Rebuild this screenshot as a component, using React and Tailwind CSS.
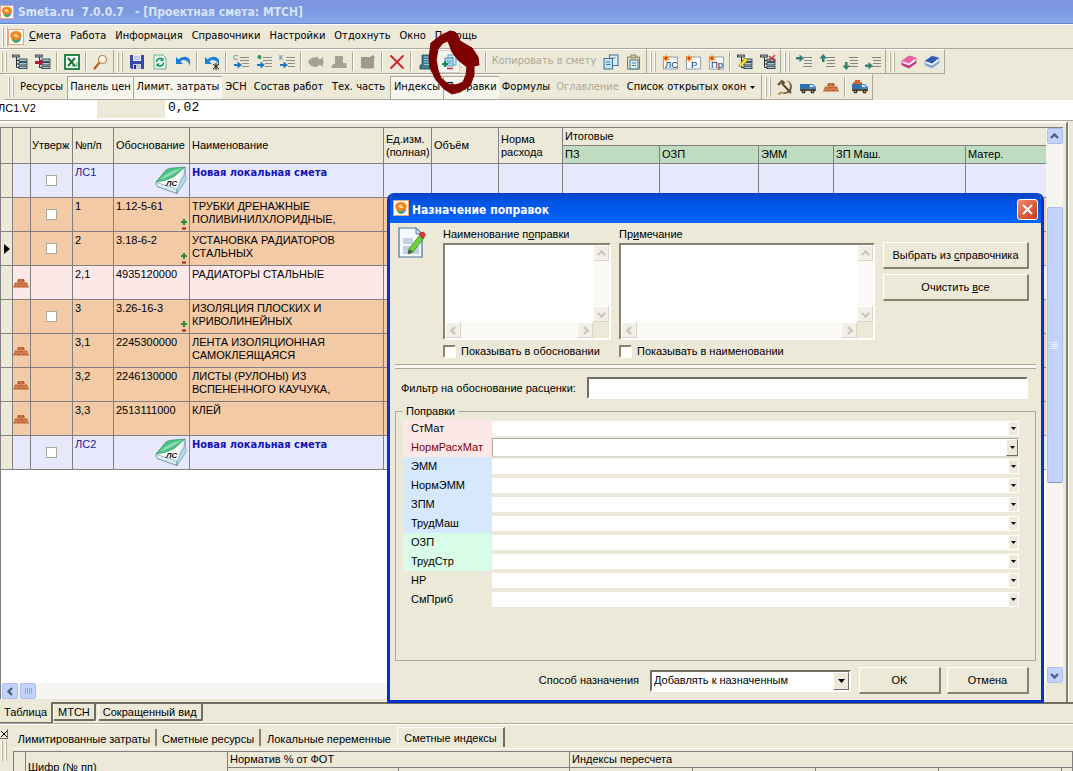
import { useState } from 'react';

const TAHOMA = "font-['DejaVu_Sans_Condensed','DejaVu_Sans',sans-serif]";
const SANS = "font-['Liberation_Sans',Arial,sans-serif]";

/* ---------- icons ---------- */

const Svg = ({ children, className = 'w-4 h-4' }) => (
  <svg viewBox="0 0 16 16" className={`${className} shrink-0`} aria-hidden="true">
    {children}
  </svg>
);

const AppIcon = ({ className }) => (
  <Svg className={className}>
    <rect x="0.5" y="0.5" width="15" height="15" fill="#fff" stroke="#e7a27e" />
    <path d="M3 8 Q4 14 8.500 14 Q13 13 13 8Z" fill="#4fa84a" />
    <path d="M9 13.500 Q13.500 12 13 7 L9 9Z" fill="#3f8fd0" />
    <ellipse cx="8" cy="6.500" rx="5.800" ry="4.600" fill="#f58220" />
    <path d="M5 7 Q6 4 9.500 4.500 L8 6 L11 7 Q8 9.500 7 7.500Z" fill="#ffe08a" />
  </Svg>
);

const TreeBase = () => (
  <>
    <rect x="0.5" y="1" width="7" height="2" fill="#9fb6c8" stroke="#1c2f3a" strokeWidth="0.8" />
    <path d="M4.500 3v10.500H8M4.500 6.500H8M4.500 10H8" fill="none" stroke="#1c2f3a" />
    <rect x="7" y="5" width="8" height="2.400" fill="#a8c8d8" stroke="#1c2f3a" strokeWidth="0.8" />
    <rect x="7" y="8.600" width="8" height="2.400" fill="#a8c8d8" stroke="#1c2f3a" strokeWidth="0.8" />
    <rect x="7" y="12.200" width="8" height="2.400" fill="#a8c8d8" stroke="#1c2f3a" strokeWidth="0.8" />
  </>
);

const TreeIcon = () => <Svg><TreeBase /></Svg>;

const TreeAddIcon = () => (
  <Svg>
    <TreeBase />
    <path d="M0 7h4V4.500L8.500 8.500 4 12.500V10H0z" fill="#b5173b" />
  </Svg>
);

const TreeEditIcon = () => (
  <Svg>
    <TreeBase />
    <path d="M2 11 L8 4 L11 6 L5 12 L2 12.500Z" fill="#ffd83a" stroke="#9a7a00" strokeWidth="0.6" />
  </Svg>
);

const TreeDeleteIcon = () => (
  <Svg>
    <TreeBase />
    <path d="M9 2l6 5M15 1L9 7" stroke="#c3242f" strokeWidth="1.200" />
  </Svg>
);

const ExcelIcon = () => (
  <Svg>
    <rect x="1" y="1" width="14" height="14" fill="#fff" stroke="#137a33" strokeWidth="1.800" />
    <path d="M4 4l7 8M11 4l-7 8" stroke="#137a33" strokeWidth="2" />
    <path d="M8 12h5V8" fill="none" stroke="#137a33" strokeWidth="0.8" />
  </Svg>
);

const MagnifierIcon = () => (
  <Svg>
    <path d="M6.500 8.500L1.500 14.500" stroke="#b0622a" strokeWidth="2.200" strokeLinecap="round" />
    <circle cx="9.500" cy="5.500" r="4" fill="#fdf6ec" stroke="#c4824a" strokeWidth="1.200" />
  </Svg>
);

const SaveIcon = () => (
  <Svg>
    <path d="M1 1h14v14H2.500L1 13.500z" fill="#3a49a8" />
    <rect x="4" y="1" width="8" height="6" fill="#e9edf7" />
    <path d="M5 3h6M5 5h6" stroke="#9aa6cf" />
    <rect x="4" y="10" width="8" height="5" fill="#c9cede" />
    <rect x="5" y="11" width="2" height="4" fill="#27348a" />
  </Svg>
);

const RefreshDocIcon = () => (
  <Svg>
    <path d="M2 1h9l3 3v11H2z" fill="#eefaf6" stroke="#3f9d8c" strokeWidth="0.8" />
    <path d="M4.500 8a3.500 3.500 0 0 1 6-2.500M11.500 8.500a3.500 3.500 0 0 1-6 2.500" fill="none" stroke="#159447" strokeWidth="1.600" />
    <path d="M11.500 3.500v3.500H8zM4.500 13V9.500H8z" fill="#159447" />
  </Svg>
);

const UndoPath = () => (
  <path d="M1 3v7h7L5.500 7.500Q9 4.500 13 8q1.500 1.500 1.500 4Q17 4 10.500 2.800Q6.500 2.200 3.500 5.200z" fill="#1f7fd6" />
);

const UndoIcon = () => <Svg><UndoPath /></Svg>;

const UndoAllIcon = () => (
  <Svg>
    <UndoPath />
    <path d="M12 9v7M9 10l6 5M15 10l-6 5" stroke="#000" />
  </Svg>
);

const LetterLinesIcon = ({ letter }) => (
  <Svg>
    <path d="M7 3.500h9M7 6.500h9M9 9.500h7M9 12.500h7" stroke="#8c8c86" />
    {letter ? (
      <text x="0" y="6" fontSize="7" fill="#666" fontFamily="Liberation Sans">{letter}</text>
    ) : (
      <circle cx="3.500" cy="3" r="2" fill="#1e9a52" />
    )}
    <path d="M1 10h3.500V7.500L9 11l-4.500 3.500V12H1z" fill="#1f74c8" />
  </Svg>
);

const FishIcon = () => (
  <Svg>
    <path d="M0 8 Q2 3.500 7 3.500 L9 2.500 10 4l2 1.500L15 3v3.500l1 1.500-1 1.500V13l-3-2.500q-2 2.500-5 2.500Q2 12.500 0 8Z" fill="#a5a293" />
  </Svg>
);

const StampIcon = () => (
  <Svg>
    <path d="M4 2h8v7h3l1 5H0l2-4h2z" fill="#a5a293" />
  </Svg>
);

const NoteIcon = () => (
  <Svg>
    <path d="M1 3h9l3-2 2 2-1 2v9q-7 1-13 0z" fill="#9d9a8b" />
  </Svg>
);

const DeleteIcon = () => (
  <Svg>
    <path d="M2 2L14 14M14 2L2 14" stroke="#d3202b" strokeWidth="1.800" strokeLinecap="round" />
  </Svg>
);

const StackIcon = () => (
  <Svg>
    <path d="M4 1h11v4h-3v8h2v2H2v-4h2z" fill="#3d7f92" stroke="#1c4656" strokeWidth="0.8" />
    <path d="M6 3h7M6 5.500h5M6 8h5M6 10.500h5" stroke="#a9d2de" strokeWidth="0.9" />
  </Svg>
);

const CorrectionsIcon = () => (
  <Svg>
    <rect x="7" y="1" width="8" height="10" fill="#d6eef8" stroke="#4b92b0" strokeWidth="0.9" />
    <rect x="4" y="4" width="8" height="8" fill="#aad7ea" stroke="#4b92b0" strokeWidth="0.9" />
    <path d="M9 3.500h4M6 7h4M6 9h4" stroke="#4b92b0" strokeWidth="0.8" />
    <path d="M1 10h6M4 7v6" stroke="#138a4e" strokeWidth="2" />
    <path d="M6 14.500h6" stroke="#c2304a" strokeWidth="1.600" />
  </Svg>
);

const PlusIcon = () => (
  <Svg>
    <path d="M0 9h6M3 6v6" stroke="#138a4e" strokeWidth="2" />
  </Svg>
);

const CopyIcon = () => (
  <Svg>
    <rect x="6.500" y="1" width="8.500" height="10.500" fill="#d8eefc" stroke="#3f6f93" />
    <rect x="1" y="4.500" width="8.500" height="10.500" fill="#bfe2f6" stroke="#3f6f93" />
    <path d="M8.500 4h4M3 8h4.500M3 10.500h4.500" stroke="#3f6f93" strokeWidth="0.9" />
  </Svg>
);

const PasteIcon = () => (
  <Svg>
    <path d="M1.500 3h12v12h-12z" fill="#e8e2c0" stroke="#7b7a58" />
    <rect x="5" y="1" width="5" height="3" fill="#c9c9a6" stroke="#7b7a58" strokeWidth="0.8" />
    <rect x="4" y="6" width="8" height="9" fill="#d6eaf4" stroke="#46788f" />
    <path d="M6 9h4M6 11.500h4" stroke="#46788f" strokeWidth="0.9" />
  </Svg>
);

const NewDocIcon = ({ letter }) => (
  <Svg>
    <rect x="1.500" y="3" width="14" height="12" fill="#f6f8fb" stroke="#7f8a98" strokeWidth="0.8" />
    <text x={letter.length > 1 ? 3 : 6} y="13.500" fontSize="9.500" fill="#123a5c" fontFamily="Liberation Sans">{letter}</text>
    <path d="M4 0l1 2.500L7.800 2 6 4.200 8 6.500l-3-.5L4 8.500 3 6 0 6.500l2-2.300L.5 2l2.700.5z" fill="#f79a1c" />
    <circle cx="4" cy="4.200" r="1.200" fill="#d22" />
  </Svg>
);

const movePaths = {
  right: 'M0 3h3.500V.5L8 4.200 3.500 8V5.500H0z',
  up: 'M3 8V4.500H.5L4.200 0 8 4.500H5.500V8z',
  down: 'M3 8v3.500H.5L4.200 16 8 11.500H5.500V8z',
  rightLow: 'M0 10.500h3.500V8L8 11.800 3.500 15.500V13H0z',
};

const MoveIcon = ({ dir }) => (
  <Svg>
    <path d="M7 3.500h9M8 6.500h8M8 9.500h8M7 12.500h9" stroke="#85857c" />
    <path d={movePaths[dir]} fill="#2d8073" />
  </Svg>
);

const EraserIcon = ({ top, side }) => (
  <Svg>
    <path d="M1 7l7-5 7 2v5l-7 5-7-3z" fill="#f3f0f4" stroke={side} strokeWidth="0.8" />
    <path d="M1 7l7-5 7 2-7 5.500z" fill={top} />
    <path d="M8 11.500l7-4.500v2l-7 5-7-3V9z" fill={side} />
  </Svg>
);

const HammerIcon = () => (
  <Svg>
    <path d="M9 1q6.500 2 6 7.500T8 15q-2 0-4-1.500 6.500.5 8.500-4T9 1Z" fill="#7b6a45" />
    <path d="M1 6l4-4 2 1.500-1.500 1.500L14 14" fill="none" stroke="#5b4a2b" strokeWidth="2" />
    <path d="M4.500 13l-3 2.500" stroke="#b08a3a" strokeWidth="2" />
  </Svg>
);

const Truck = ({ load }) => (
  <Svg>
    {load && <path d="M1 5V3h2V1h5v2h2v2z" fill="#d2642a" />}
    <path d="M0 5h9v5H0z" fill="#2f72b0" />
    <path d="M9 5h3.500L16 8v3.500H9z" fill="#3f86c6" />
    <path d="M10 6h2.200l1.800 2h-4z" fill="#d9eefa" />
    <path d="M0 10h16v2H0z" fill="#5c5136" />
    <circle cx="3.500" cy="12.500" r="2" fill="#2a2a2a" />
    <circle cx="12.500" cy="12.500" r="2" fill="#2a2a2a" />
    <circle cx="3.500" cy="12.500" r="0.8" fill="#d9c36a" />
    <circle cx="12.500" cy="12.500" r="0.8" fill="#d9c36a" />
  </Svg>
);

const BricksIcon = () => (
  <Svg>
    <path d="M5 4h6l1 3.500h2l2 5H0l2-5h2z" fill="#b9602f" />
    <path d="M1 10h14M3 7.500h10M8 4v3.500M5 7.500V10M11 7.500V10M3 10v2.500M8 10v2.500M13 10v2.500" stroke="#ecab80" strokeWidth="0.6" />
  </Svg>
);

const BookIcon = () => (
  <svg viewBox="0 0 32 28" className="w-8 h-7 shrink-0" aria-hidden="true">
    <path d="M1 16L22 23V27.500L3 21Q0 19 1 16Z" fill="#d9ecf5" stroke="#4d8795" strokeWidth="0.8" />
    <path d="M1 16L22 23 31 14 30 1Z" fill="#fff" />
    <path d="M30 1L31 14 22 27.500V23L29 9Z" fill="#b9dcea" stroke="#4d8795" strokeWidth="0.6" />
    <path d="M1 16L22 23 30 1" fill="#fff" stroke="#7fb0bd" strokeWidth="0.5" />
    <path d="M1 16L10 5Q12 2.500 17 2L30 1 20 10Q12 15 1 16Z" fill="#4fc488" stroke="#2c8a5c" strokeWidth="0.6" />
    <path d="M4 14 Q14 5 27 2 Q16 10 4 14Z" fill="#a9ebc4" opacity="0.7" />
    <text x="11" y="20" fontSize="8" fontStyle="italic" fontWeight="bold" fill="#111" fontFamily="Liberation Sans">ЛС</text>
  </svg>
);

const EditPageIcon = () => (
  <svg viewBox="0 0 30 32" className="w-[30px] h-8" aria-hidden="true">
    <path d="M1 1h17l6 6v23H1z" fill="#f4f8fc" stroke="#4a6f96" strokeWidth="1.200" />
    <path d="M18 1v6h6z" fill="#c9d8e6" stroke="#4a6f96" strokeWidth="0.8" />
    <path d="M5 11h10v6H5zM5 19h16v8H5z" fill="#c3d0e2" />
    <path d="M11 22L21 9l4 3-10 13-5 2z" fill="#6fd13c" stroke="#2f8a1c" strokeWidth="0.8" />
    <path d="M10 27l1-5 4 3z" fill="#555" />
    <path d="M21 8l1.500-2.500q3.500-1.500 5 2L25.500 11.500z" fill="#d83a34" stroke="#8f1d1a" strokeWidth="0.6" />
  </svg>
);

const CorrectionMark = () => (
  <svg viewBox="0 0 8 12" className="w-2 h-3 shrink-0" aria-hidden="true">
    <path d="M1 4h6M4 1v6" stroke="#2f8f2a" strokeWidth="2.200" />
    <path d="M2 10.500h4" stroke="#a3211b" strokeWidth="2" />
  </svg>
);

const Chevron = ({ dir, color }) => {
  const d = {
    up: 'M2 7l3.500-3.500L9 7',
    down: 'M2 4l3.500 3.500L9 4',
    left: 'M7 2L3.500 5.500 7 9',
    right: 'M4 2l3.500 3.500L4 9',
  }[dir];
  return (
    <svg viewBox="0 0 11 11" className="w-[11px] h-[11px]" aria-hidden="true">
      <path d={d} fill="none" stroke={color} strokeWidth="2.400" />
    </svg>
  );
};

const Triangle = () => (
  <svg viewBox="0 0 7 4" className="w-[7px] h-1" aria-hidden="true">
    <path d="M0 0h7L3.500 4z" fill="#000" />
  </svg>
);

/* ---------- toolbars ---------- */

const Grip = () => (
  <span className="flex gap-[2px] h-5 shrink-0">
    <span className="w-[2px] border-l border-white border-r border-r-[#b5b19d]" />
    <span className="w-[2px] border-l border-white border-r border-r-[#b5b19d]" />
  </span>
);

const Sep = () => (
  <span className="w-[6px] flex justify-center self-stretch py-[2px] shrink-0">
    <span className="w-[2px] border-l border-[#aca899] border-r border-r-white" />
  </span>
);

const Group = ({ first, children }) => (
  <div className="flex items-center h-full pr-px border-r border-b border-[#aca899] border-t border-t-white shrink-0">
    <span className={first ? 'w-2 flex justify-center' : 'w-[11px] flex justify-center'}>
      <Grip />
    </span>
    {children}
  </div>
);

const Tool = ({ label, pressed, children }) => (
  <button
    type="button"
    aria-label={label}
    className={`w-[23px] h-[23px] flex items-center justify-center shrink-0 ${pressed ? 'bg-[#f6f5ee] border border-[#d5d2c2]' : ''}`}
  >
    {children}
  </button>
);

const MainToolbar = () => (
  <div className="flex h-[26px] border-t border-[#aca899]">
    <Group first>
      <Tool label="Дерево"><TreeIcon /></Tool>
      <Tool label="Добавить в дерево"><TreeAddIcon /></Tool>
      <Sep />
      <Tool label="Excel"><ExcelIcon /></Tool>
      <Sep />
      <Tool label="Поиск"><MagnifierIcon /></Tool>
    </Group>
    <Group>
      <Tool label="Сохранить"><SaveIcon /></Tool>
      <Tool label="Обновить"><RefreshDocIcon /></Tool>
      <Tool label="Отменить"><UndoIcon /></Tool>
      <Sep />
      <Tool label="Отменить все"><UndoAllIcon /></Tool>
      <Sep />
      <Tool label="Вставить строку С"><LetterLinesIcon letter="С" /></Tool>
      <Tool label="Вставить строку"><LetterLinesIcon /></Tool>
      <Tool label="Вставить строку К"><LetterLinesIcon letter="К" /></Tool>
      <Sep />
      <Tool label="Расценка"><FishIcon /></Tool>
      <Tool label="Штамп"><StampIcon /></Tool>
      <Sep />
      <Tool label="Комментарий"><NoteIcon /></Tool>
      <Sep />
      <Tool label="Удалить"><DeleteIcon /></Tool>
      <Sep />
      <Tool label="Индексы"><StackIcon /></Tool>
      <Tool label="Поправки" pressed><CorrectionsIcon /></Tool>
      <Tool label="Добавить поправку"><PlusIcon /></Tool>
      <Sep />
      <button type="button" disabled className="w-[110px] h-[23px] text-center text-[#aca899] shrink-0 whitespace-nowrap">
        Копировать в смету
      </button>
      <Tool label="Копировать"><CopyIcon /></Tool>
      <Tool label="Вставить"><PasteIcon /></Tool>
    </Group>
    <Group>
      <Tool label="Новая локальная смета"><NewDocIcon letter="ЛС" /></Tool>
      <Tool label="Новый раздел"><NewDocIcon letter="Р" /></Tool>
      <Tool label="Новый подраздел"><NewDocIcon letter="Пр" /></Tool>
      <Sep />
      <Tool label="Изменить"><TreeEditIcon /></Tool>
      <Tool label="Удалить из дерева"><TreeDeleteIcon /></Tool>
    </Group>
    <Group>
      <Tool label="Вправо"><MoveIcon dir="right" /></Tool>
      <Tool label="Вверх"><MoveIcon dir="up" /></Tool>
      <Tool label="Вниз"><MoveIcon dir="down" /></Tool>
      <Tool label="В конец"><MoveIcon dir="rightLow" /></Tool>
    </Group>
    <Group>
      <Tool label="Розовый справочник"><EraserIcon top="#ee5fa4" side="#c23277" /></Tool>
      <Tool label="Синий справочник"><EraserIcon top="#2f57b8" side="#7fa6d8" /></Tool>
    </Group>
  </div>
);

const panels = [
  { text: 'Ресурсы', width: 'w-[51px]' },
  { text: 'Панель цен', width: 'w-[66px]', on: true },
  { text: 'Лимит. затраты', width: 'w-[89px]', on: true },
  { text: 'ЭСН', width: 'w-[28px]' },
  { text: 'Состав работ', width: 'w-[77px]' },
  { text: 'Тех. часть', width: 'w-[63px]' },
  { text: 'Индексы', width: 'w-[53px]', on: true },
  { text: 'Поправки', width: 'w-[56px]', on: true },
  { text: 'Формулы', width: 'w-[54px]' },
  { text: 'Оглавление', width: 'w-[69px]', off: true },
];

const PanelToolbar = () => (
  <div className="flex h-[26px] pl-[5px]">
    <Group>
      {panels.map((p) => (
        <button
          key={p.text}
          type="button"
          disabled={p.off}
          className={`${p.width} h-[23px] flex items-center justify-center whitespace-nowrap shrink-0 ${
            p.on ? 'bg-[#f6f5ee] border-t border-l border-[#aca899]' : ''
          } ${p.off ? 'text-[#aca899]' : ''}`}
        >
          {p.text}
        </button>
      ))}
      <button type="button" className="w-[138px] h-[23px] flex items-center justify-center gap-1 whitespace-nowrap shrink-0">
        Список открытых окон
        <svg viewBox="0 0 5 3" className="w-[5px] h-[3px]" aria-hidden="true">
          <path d="M0 0h5L2.500 3z" />
        </svg>
      </button>
    </Group>
    <Group>
      <Tool label="Работы"><HammerIcon /></Tool>
      <Tool label="Машины"><Truck /></Tool>
      <Tool label="Материалы"><BricksIcon /></Tool>
      <Sep />
      <Tool label="Перевозка"><Truck load /></Tool>
    </Group>
  </div>
);

const menuItems = ['Работа', 'Информация', 'Справочники', 'Настройки', 'Отдохнуть', 'Окно', 'Помощь'];

const MenuBar = () => (
  <div className="h-6 flex items-center pl-[2px] border-t border-white">
    <Grip />
    <AppIcon className="w-4 h-4" />
    <nav className="flex gap-[9px] pl-[5px]">
      <button type="button"><u>С</u>мета</button>
      {menuItems.map((m) => (
        <button key={m} type="button">{m}</button>
      ))}
    </nav>
  </div>
);

/* Hand-drawn marker loop round the corrections button */
const MarkerLoop = () => (
  <svg viewBox="0 0 60 68" className="absolute left-[424px] top-[29px] w-[60px] h-[68px] pointer-events-none" aria-hidden="true">
    <path
      fillRule="evenodd"
      fill="#7d0000"
      stroke="#7d0000"
      strokeLinejoin="round"
      d="M26 2L31 3 34 6 36 12 48 19 54 28 55 36 50 37 50 46 46 57 36 63 28 65 20 60 12 51 6 39 5 29 7 14 16 7Z
         M19 14L14 20 12 31 14 41 17 49 24 55 32 56 39 53 42 46 43 38 34 31 28 23 24 12Z"
    />
  </svg>
);

/* ---------- estimate grid ---------- */

const rows = [
  { num: 'ЛС1', title: 'Новая локальная смета', kind: 'head', check: true },
  { num: '1', code: '1.12-5-61', title: 'ТРУБКИ ДРЕНАЖНЫЕ ПОЛИВИНИЛХЛОРИДНЫЕ,', kind: 'work', check: true, mark: true },
  { num: '2', code: '3.18-6-2', title: 'УСТАНОВКА РАДИАТОРОВ СТАЛЬНЫХ', kind: 'work', check: true, mark: true, current: true },
  { num: '2,1', code: '4935120000', title: 'РАДИАТОРЫ СТАЛЬНЫЕ', kind: 'pink', bricks: true },
  { num: '3', code: '3.26-16-3', title: 'ИЗОЛЯЦИЯ ПЛОСКИХ И КРИВОЛИНЕЙНЫХ', kind: 'work', check: true, mark: true },
  { num: '3,1', code: '2245300000', title: 'ЛЕНТА ИЗОЛЯЦИОННАЯ САМОКЛЕЯЩАЯСЯ', kind: 'work', bricks: true },
  { num: '3,2', code: '2246130000', title: 'ЛИСТЫ (РУЛОНЫ) ИЗ ВСПЕНЕННОГО КАУЧУКА,', kind: 'work', bricks: true },
  { num: '3,3', code: '2513111000', title: 'КЛЕЙ', kind: 'work', bricks: true },
  { num: 'ЛС2', title: 'Новая локальная смета', kind: 'head', check: true },
];

const rowBg = { head: 'bg-[#e8e8fc]', work: 'bg-[#f2caa6]', pink: 'bg-[#fde8e8]' };
const line = 'border-r border-b border-[#808080]';

const EstimateTable = () => (
  <table className={`${SANS} table-fixed w-full border-separate border-spacing-0 text-left leading-[13px]`}>
    <colgroup>
      <col className="w-[12px]" />
      <col className="w-[18px]" />
      <col className="w-[42px]" />
      <col className="w-[41px]" />
      <col className="w-[76px]" />
      <col className="w-[194px]" />
      <col className="w-[48px]" />
      <col className="w-[67px]" />
      <col className="w-[64px]" />
      <col className="w-[97px]" />
      <col className="w-[99px]" />
      <col className="w-[75px]" />
      <col className="w-[132px]" />
      <col />
    </colgroup>
    <thead className="bg-[#ece9d8]">
      <tr className="h-[18px]">
        <th rowSpan={2} className={line} />
        <th rowSpan={2} className={line} />
        <th rowSpan={2} className={`${line} font-normal pl-px whitespace-nowrap`}>Утверж</th>
        <th rowSpan={2} className={`${line} font-normal pl-[2px] whitespace-nowrap`}>№п/п</th>
        <th rowSpan={2} className={`${line} font-normal pl-[2px] whitespace-nowrap`}>Обоснование</th>
        <th rowSpan={2} className={`${line} font-normal pl-[2px]`}>Наименование</th>
        <th rowSpan={2} className={`${line} font-normal pl-[2px] whitespace-nowrap`}>Ед.изм.<br />(полная)</th>
        <th rowSpan={2} className={`${line} font-normal pl-[2px]`}>Объём</th>
        <th rowSpan={2} className={`${line} font-normal pl-[2px]`}>Норма<br />расхода</th>
        <th colSpan={5} className="border-b border-[#808080] font-normal pl-[2px]">Итоговые</th>
      </tr>
      <tr className="h-[18px] bg-[#c0dcc0]">
        <th className={`${line} font-normal pl-[2px]`}>ПЗ</th>
        <th className={`${line} font-normal pl-[2px]`}>ОЗП</th>
        <th className={`${line} font-normal pl-[2px]`}>ЭММ</th>
        <th className={`${line} font-normal pl-[2px]`}>ЗП Маш.</th>
        <th className="border-b border-[#808080] font-normal pl-[2px]">Матер.</th>
      </tr>
    </thead>
    <tbody>
      {rows.map((r) => (
        <tr key={r.num} className={`h-[34px] align-top ${rowBg[r.kind]}`}>
          <td className={`${line} bg-[#ece9d8] align-middle`}>
            {r.current && (
              <svg viewBox="0 0 6 10" className="w-[6px] h-[10px] ml-[3px]" aria-hidden="true">
                <path d="M0 0l6 5-6 5z" />
              </svg>
            )}
          </td>
          <td className={`${line} align-middle`}>{r.bricks && <BricksIcon />}</td>
          <td className={`${line} align-middle text-center`}>
            {r.check && (
              <input
                type="checkbox"
                aria-label={`Утверждено ${r.num}`}
                className="block mx-auto w-[11px] h-[11px] appearance-none bg-white border border-[#aca899] checked:bg-gray-500"
              />
            )}
          </td>
          <td className={`${line} pl-[2px] pt-[2px] ${r.kind === 'head' ? 'text-[#1a1a9c]' : ''}`}>{r.num}</td>
          <td className={`${line} pl-[2px] ${r.kind === 'head' ? '' : 'pt-[2px]'}`}>
            {r.kind === 'head' ? (
              <div className="flex justify-end pr-[2px] pt-[2px]"><BookIcon /></div>
            ) : (
              <div className="flex h-[30px] justify-between">
                <span>{r.code}</span>
                {r.mark && <span className="self-end pr-[1px]"><CorrectionMark /></span>}
              </div>
            )}
          </td>
          <td className={`${line} px-[2px] pt-[2px]`}>
            {r.kind === 'head' ? (
              <b className={`${TAHOMA} text-[#1414b4]`}>{r.title}</b>
            ) : (
              <span className="block w-[160px]">{r.title}</span>
            )}
          </td>
          {[0, 1, 2, 3, 4, 5, 6].map((c) => <td key={c} className={line} />)}
          <td className="border-b border-[#808080]" />
        </tr>
      ))}
    </tbody>
  </table>
);

const ScrollButton = ({ dir, label }) => (
  <button
    type="button"
    aria-label={label}
    className="w-4 h-4 flex items-center justify-center rounded-[2px] bg-[#c3d3fd] border border-[#a9bdf0] shrink-0"
  >
    <Chevron dir={dir} color="#4d6185" />
  </button>
);

const EstimateView = () => (
  <div className="flex-1 min-h-0 flex border-t border-[#aca899]">
    <div className="flex-1 min-w-0 flex flex-col border-t-2 border-white border-r-2 border-r-[#85826f]">
      <div className="h-1 shrink-0" />
      <div className="flex-1 min-h-0 flex border-t border-[#808080] mr-[3px]">
        <div className="flex-1 min-w-0 flex flex-col border-l border-[#808080]">
          <div className="flex-1 min-h-0 overflow-hidden bg-white">
            <EstimateTable />
          </div>
          <div className="h-4 flex gap-[2px] pl-[1px] bg-[#f6f5f1] shrink-0">
            <ScrollButton dir="left" label="Прокрутить влево" />
            <span className="w-4 flex items-center justify-center gap-[1px] rounded-[2px] bg-[#c3d3fd] border border-[#a9bdf0]">
              {[0, 1, 2, 3].map((i) => <span key={i} className="w-px h-[6px] bg-[#8fa8e0]" />)}
            </span>
          </div>
        </div>
        <div className="w-[17px] flex flex-col items-center bg-[#f6f5f1] mb-4 shrink-0">
          <ScrollButton dir="up" label="Прокрутить вверх" />
          <span className="h-[63px]" />
          <span className="h-[276px] w-4 flex flex-col items-center justify-center gap-[1px] rounded-[2px] bg-[#c3d3fd] border border-[#a9bdf0] border-b-[#7f93c8]">
            {[0, 1, 2, 3].map((i) => <span key={i} className="w-[7px] h-px bg-[#eef4fe]" />)}
          </span>
          <span className="flex-1" />
          <ScrollButton dir="down" label="Прокрутить вниз" />
        </div>
      </div>
      <div className="h-[3px] shrink-0" />
    </div>
    <div className="w-[5px] border-l border-white shrink-0" />
  </div>
);

const viewTabs = ['МТСН', 'Сокращенный вид'];

const ViewTabs = () => (
  <div className={`${SANS} h-[22px] flex items-start border-b border-[#aca899] shrink-0`}>
    <button type="button" className="h-[21px] w-[53px] border-r-2 border-b border-[#716f64] shrink-0">Таблица</button>
    <div className="flex-1 flex border-t-2 border-[#716f64] gap-[2px]">
      {viewTabs.map((t) => (
        <button key={t} type="button" className="h-[17px] px-[4px] border-r-2 border-b-2 border-[#716f64] border-l border-l-white rounded-b-[2px]">
          {t}
        </button>
      ))}
    </div>
  </div>
);

const BottomPanel = () => (
  <div className={`${SANS} h-[47px] flex overflow-hidden border-t border-white shrink-0`}>
    <div className="w-[13px] shrink-0">
      <button type="button" aria-label="Закрыть панель" className="w-2 h-[10px] mt-[4px] flex items-center justify-center border-r border-b border-[#716f64]">
        <svg viewBox="0 0 6 6" className="w-[6px] h-[6px]" aria-hidden="true">
          <path d="M0 0l6 6M6 0L0 6" stroke="#000" />
        </svg>
      </button>
      <div className="pl-[1px] pt-[2px]"><Grip /></div>
    </div>
    <div className="flex-1 min-w-0">
      <div className="h-[24px] flex items-start border-b border-white leading-[24px]">
        <button type="button" className="w-[144px] h-[17px] mt-[4px] leading-[20px] border-r-2 border-[#85826f] whitespace-nowrap">Лимитированные затраты</button>
        <button type="button" className="w-[104px] h-[17px] mt-[4px] leading-[20px] border-r-2 border-[#85826f] whitespace-nowrap">Сметные ресурсы</button>
        <button type="button" className="w-[137px] h-[17px] mt-[4px] leading-[20px] border-r border-white whitespace-nowrap">Локальные переменные</button>
        <button type="button" className="w-[107px] h-[20px] mt-[2px] leading-[18px] border-r-2 border-[#716f64] border-t border-t-white whitespace-nowrap">Сметные индексы</button>
      </div>
      <div className="h-[2px]" />
      <table className="table-fixed w-full border-separate border-spacing-0 border-t border-l border-[#808080] text-left">
        <colgroup>
          <col className="w-[12px]" />
          <col className="w-[202px]" />
          <col className="w-[171px]" />
          <col className="w-[171px]" />
          <col className="w-[123px]" />
          <col className="w-[123px]" />
          <col className="w-[123px]" />
          <col className="w-[123px]" />
          <col />
        </colgroup>
        <thead>
          <tr className="h-4">
            <th rowSpan={2} className={line} />
            <th rowSpan={2} className={`${line} font-normal pl-[2px]`}>Шифр (№ пп)</th>
            <th colSpan={2} className={`${line} font-normal pl-[2px] leading-[15px]`}>Норматив % от ФОТ</th>
            <th colSpan={5} className={`${line} font-normal pl-[2px] leading-[15px]`}>Индексы пересчета</th>
          </tr>
          <tr className="h-4">
            {[0, 1, 2, 3, 4, 5, 6].map((c) => <th key={c} className={line} />)}
          </tr>
        </thead>
      </table>
    </div>
  </div>
);

/* ---------- corrections dialog ---------- */

const DullButton = ({ dir }) => (
  <span className="w-4 h-4 flex items-center justify-center bg-[#f1efe6] border border-white border-r-[#d8d5c6] border-b-[#d8d5c6]">
    <Chevron dir={dir} color="#c9c7ba" />
  </span>
);

const Memo = ({ id }) => (
  <div className="grid grid-cols-[1fr_16px] grid-rows-[1fr_16px] h-[97px] bg-white border-2 border-[#85826f] border-r-white border-b-white">
    <textarea id={id} className="resize-none outline-none w-full h-full px-1 bg-white" />
    <div className="flex flex-col justify-between bg-[#fbfaf7]">
      <DullButton dir="up" />
      <DullButton dir="down" />
    </div>
    <div className="flex justify-between bg-[#fbfaf7]">
      <DullButton dir="left" />
      <DullButton dir="right" />
    </div>
    <div className="bg-[#ece9d8]" />
  </div>
);

const PushButton = ({ className = '', children }) => (
  <button
    type="button"
    className={`h-[27px] bg-[#ece9d8] border border-white border-r-2 border-b-2 border-r-[#85826f] border-b-[#85826f] ${className}`}
  >
    {children}
  </button>
);

const Check = ({ label }) => (
  <label className="flex items-center gap-[5px] mt-[4px] h-[14px] whitespace-nowrap">
    <input
      type="checkbox"
      className="w-[13px] h-[13px] appearance-none bg-white border-2 border-[#85826f] border-r-white border-b-white checked:bg-gray-500"
    />
    {label}
  </label>
);

const coefficients = [
  { name: 'СтМат', bg: 'bg-[#fde8e8]' },
  { name: 'НормРасхМат', bg: 'bg-[#fde8e8]', active: true },
  { name: 'ЭММ', bg: 'bg-[#d6e8fc]' },
  { name: 'НормЭММ', bg: 'bg-[#d6e8fc]' },
  { name: 'ЗПМ', bg: 'bg-[#d6e8fc]' },
  { name: 'ТрудМаш', bg: 'bg-[#d6e8fc]' },
  { name: 'ОЗП', bg: 'bg-[#d8fce8]' },
  { name: 'ТрудСтр', bg: 'bg-[#d8fce8]' },
  { name: 'НР', bg: '' },
  { name: 'СмПриб', bg: '' },
];

const CoefficientRow = ({ name, bg, active }) => (
  <div className="h-[19px] flex items-center">
    <label htmlFor={`k-${name}`} className={`w-[88px] h-full pl-2 leading-[19px] shrink-0 ${bg} ${active ? 'text-[#7d0000]' : ''}`}>
      {name}
    </label>
    <div
      className={`flex-1 ml-px flex bg-white ${
        active ? 'h-[19px] border border-[#aca899] border-r-white border-b-[#d5d2c2]' : 'h-[15px]'
      }`}
    >
      <select id={`k-${name}`} className="flex-1 appearance-none outline-none bg-white px-1" />
      <span
        className={`flex items-center justify-center pointer-events-none bg-[#ece9d8] ${
          active ? 'w-3 border border-white border-r-[#716f64] border-b-[#716f64]' : 'w-[11px] border border-white'
        }`}
      >
        <svg viewBox="0 0 5 3" className="w-[5px] h-[3px]" aria-hidden="true">
          <path d="M0 0h5L2.500 3z" />
        </svg>
      </span>
    </div>
  </div>
);

const CorrectionsDialog = ({ onClose }) => {
  const [filter, setFilter] = useState('');

  return (
    <section
      role="dialog"
      aria-labelledby="dialog-title"
      className={`${SANS} absolute left-[387px] top-[193px] w-[657px] flex flex-col rounded-t-[7px] bg-[#ece9d8] border-[3px] border-t-0 border-[#0831c8] overflow-hidden`}
    >
      <header className="h-[30px] -mx-[3px] px-[6px] flex items-center bg-linear-to-b from-[#0a3fc0] via-[#0055e5] via-30% to-[#0264f8]">
        <AppIcon className="w-4 h-4" />
        <h2 id="dialog-title" className={`${TAHOMA} text-xs font-bold text-white pl-[3px] pt-[3px] flex-1`}>
          Назначение поправок
        </h2>
        <button
          type="button"
          aria-label="Закрыть"
          onClick={onClose}
          className="w-[21px] h-[21px] mt-[2px] flex items-center justify-center rounded-[3px] border border-white bg-linear-to-br from-[#ee8a6c] to-[#c8330f]"
        >
          <svg viewBox="0 0 11 11" className="w-[11px] h-[11px]" aria-hidden="true">
            <path d="M1 1l9 9M10 1L1 10" stroke="#fff" strokeWidth="2" />
          </svg>
        </button>
      </header>

      <div className="flex pl-2 pr-3 pt-1">
        <div className="w-[45px] shrink-0"><EditPageIcon /></div>
        <div className="w-[168px] shrink-0">
          <label htmlFor="memo-name" className="block h-4 leading-[14px]">Наименование п<u>о</u>правки</label>
          <Memo id="memo-name" />
          <Check label="Показывать в обосновании" />
        </div>
        <div className="flex-1 ml-2">
          <label htmlFor="memo-note" className="block h-4 leading-[14px]">Пр<u>и</u>мечание</label>
          <Memo id="memo-note" />
          <Check label="Показывать в наименовании" />
        </div>
        <div className="w-[146px] ml-2 pt-[15px] flex flex-col gap-[5px] shrink-0">
          <PushButton>Выбрать из <u>с</u>правочника</PushButton>
          <PushButton>Очистить <u>в</u>се</PushButton>
        </div>
      </div>

      <div className="mx-[5px] mt-[6px] h-[5px] border-t border-b border-[#aca899] bg-white/60" />

      <div className="flex items-center pl-[11px] pr-[13px] mt-2 gap-2">
        <label htmlFor="filter" className="w-[178px] whitespace-nowrap">Фильтр на обоснование расценки:</label>
        <input
          id="filter"
          type="text"
          value={filter}
          onChange={(e) => setFilter(e.target.value)}
          className="flex-1 h-[22px] px-1 bg-white outline-none border-2 border-[#716f64] border-r-white border-b-white"
        />
      </div>

      <fieldset className="mx-[5px] mt-1 h-[258px] px-[7px] border border-[#aca899] pr-[16px]">
        <legend className="px-[3px] leading-[16px] h-4">Поправки</legend>
        {coefficients.map((c) => <CoefficientRow key={c.name} {...c} />)}
      </fieldset>

      <footer className="flex items-center justify-end gap-[6px] pr-3 pt-[6px] pb-[6px]">
        <label htmlFor="mode">Способ назначения</label>
        <div className="relative ml-[5px] mr-[2px]">
          <select
            id="mode"
            defaultValue="add"
            className="block w-[201px] h-[22px] pl-[2px] appearance-none outline-none bg-white border-2 border-[#716f64] border-r-white border-b-white"
          >
            <option value="add">Добавлять к назначенным</option>
            <option value="replace">Заменять назначенные</option>
          </select>
          <span className="absolute right-[2px] top-[2px] w-4 h-[18px] flex items-center justify-center pointer-events-none bg-[#ece9d8] border border-white border-r-[#716f64] border-b-[#716f64]">
            <Triangle />
          </span>
        </div>
        <PushButton className="w-[82px]">OK</PushButton>
        <PushButton className="w-[82px]">Отмена</PushButton>
      </footer>
    </section>
  );
};

/* ---------- page ---------- */

export default function App() {
  const [open, setOpen] = useState(true);

  return (
    <div className={`${TAHOMA} relative h-screen flex flex-col overflow-hidden bg-[#ece9d8] text-[11px] text-black`}>
      <header className="h-6 flex items-center shrink-0 bg-linear-to-b from-[#7d98e0] via-[#7a96df] via-40% to-[#86a8ee] border-b border-[#6a83c4]">
        <AppIcon className="w-[14px] h-[14px]" />
        <h1 className="pl-1 text-xs font-bold text-[#d8e4f8] whitespace-pre">Smeta.ru  7.0.0.7   - [Проектная смета: МТСН]</h1>
      </header>
      <MenuBar />
      <MainToolbar />
      <PanelToolbar />

      <div className="h-5 flex bg-white shrink-0">
        <input aria-label="Ячейка" defaultValue="ЛС1.V2" className={`${SANS} w-[97px] h-4 -indent-[2px] bg-white outline-none`} />
        <span className="w-[68px] h-[18px] bg-[#ece9d8]" />
        <input aria-label="Значение" defaultValue="0,02" className="flex-1 h-4 pl-[3px] bg-white outline-none font-['Liberation_Mono',monospace] text-[13px]" />
      </div>

      <EstimateView />
      <ViewTabs />
      <BottomPanel />

      <MarkerLoop />
      {open && <CorrectionsDialog onClose={() => setOpen(false)} />}
    </div>
  );
}
